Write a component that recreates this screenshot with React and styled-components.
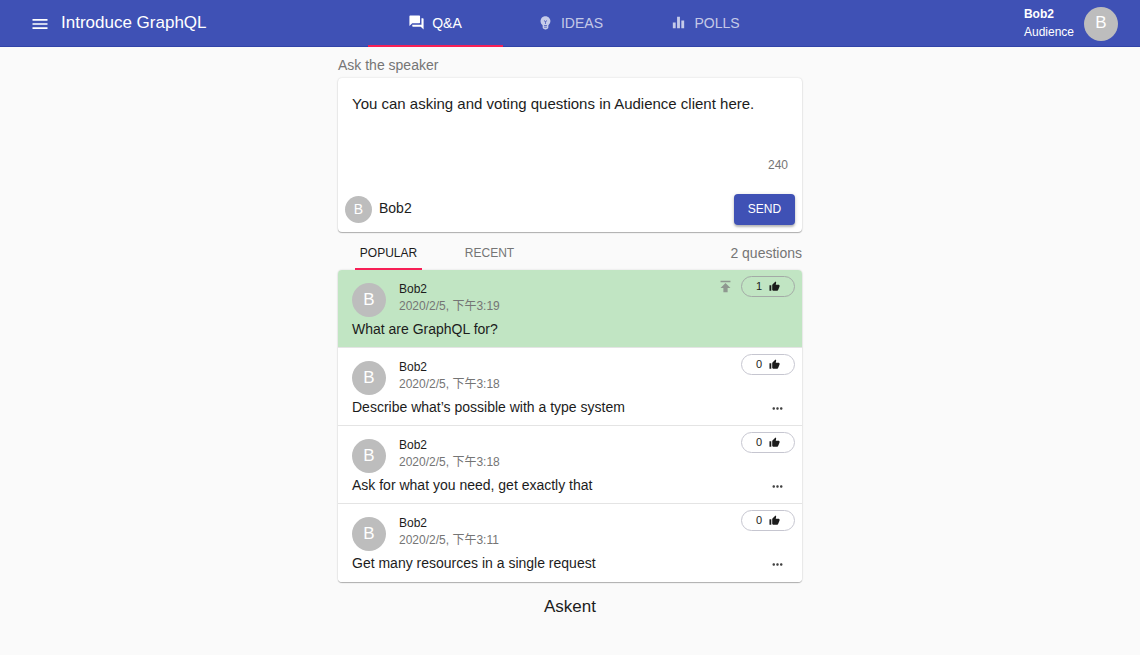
import React, { useState } from "react";
import styled, { createGlobalStyle } from "styled-components";
import {
  MdMenu,
  MdQuestionAnswer,
  MdEmojiObjects,
  MdEqualizer,
  MdThumbUp,
  MdPublish,
  MdMoreHoriz,
} from "react-icons/md";

const GlobalStyle = createGlobalStyle`
  *, *::before, *::after { box-sizing: border-box; }
  body {
    margin: 0;
    background: #fafafa;
    color: #1c1c1c;
    font-family: "Liberation Sans", Arial, "Noto Sans CJK SC", sans-serif;
    font-size: 14px;
    line-height: 20px;
  }
  button, textarea { font-family: inherit; color: inherit; }
`;

const PlainButton = styled.button`
  display: inline-flex;
  align-items: center;
  justify-content: center;
  padding: 0;
  border: 0;
  background: none;
  cursor: pointer;
`;

const Header = styled.header`
  display: grid;
  grid-template-columns: 1fr auto 1fr;
  height: 47px;
  padding: 0 22px;
  background: #3f51b5;
  box-shadow: inset 0 -1px 0 #3144a8;
  color: #fff;
`;

const Brand = styled.div`
  display: flex;
  align-items: center;
  gap: 11px;
  padding-left: 8px;
`;

const Title = styled.h1`
  margin: 0;
  padding-bottom: 2px;
  font-size: 17px;
  font-weight: 400;
  line-height: 20px;
  white-space: nowrap;
`;

const MainTabs = styled.nav`
  display: flex;
`;

const MainTab = styled(PlainButton)`
  width: 135px;
  height: 47px;
  gap: 7px;
  font-size: 14px;
  color: ${(p) => (p.$active ? "#fff" : "rgba(255, 255, 255, 0.7)")};
  border-bottom: 2px solid ${(p) => (p.$active ? "#f71f56" : "transparent")};
`;

const Account = styled.div`
  display: flex;
  align-items: center;
  justify-content: flex-end;
  gap: 10px;
  font-size: 12px;
  line-height: 18px;
`;

const AccountText = styled.div`
  padding-bottom: 2px;
`;

const AccountName = styled.div`
  font-weight: 700;
`;

const Avatar = styled.span`
  display: flex;
  flex: none;
  align-items: center;
  justify-content: center;
  width: ${(p) => (p.$small ? 27 : 34)}px;
  height: ${(p) => (p.$small ? 27 : 34)}px;
  padding-bottom: 2px;
  border-radius: 50%;
  background: #bdbdbd;
  color: #fff;
  font-size: ${(p) => (p.$small ? 14 : 17)}px;
`;

const Main = styled.main`
  max-width: 464px;
  margin: 0 auto;
  padding-top: 8px;
`;

const FieldLabel = styled.label`
  display: block;
  margin-bottom: 3px;
  color: #757575;
`;

const Card = styled.div`
  overflow: hidden;
  border-radius: 4px;
  background: #fff;
  box-shadow: 0 1px 1px rgba(0, 0, 0, 0.28), 0 0 2px rgba(0, 0, 0, 0.16);
`;

const Composer = styled(Card).attrs({ as: "form" })`
  display: flex;
  flex-direction: column;
`;

const QuestionInput = styled.textarea`
  display: block;
  width: 100%;
  height: 77px;
  padding: 16px 14px 0;
  border: 0;
  outline: 0;
  resize: none;
  background: transparent;
  font-size: 15px;
  line-height: 20px;
`;

const Counter = styled.div`
  padding: 0 14px;
  text-align: right;
  font-size: 12px;
  color: #757575;
`;

const ComposerFooter = styled.div`
  display: flex;
  align-items: center;
  gap: 7px;
  padding: 19px 7px 7px;
`;

const Author = styled.span`
  flex: 1;
  padding-bottom: 3px;
`;

const SendButton = styled(PlainButton)`
  width: 61px;
  height: 31px;
  padding-bottom: 2px;
  border-radius: 4px;
  background: #3f51b5;
  color: #fff;
  font-size: 12px;
  box-shadow: 0 2px 2px rgba(0, 0, 0, 0.2), 0 1px 4px rgba(0, 0, 0, 0.16);
`;

const ListBar = styled.div`
  display: flex;
  align-items: center;
  height: 38px;
`;

const SortTab = styled(PlainButton)`
  width: 67px;
  height: 38px;
  margin: 0 17px;
  padding-top: 6px;
  font-size: 12px;
  color: ${(p) => (p.$active ? "#1c1c1c" : "#757575")};
  border-bottom: 2px solid ${(p) => (p.$active ? "#f71f56" : "transparent")};
`;

const Total = styled.span`
  margin-left: auto;
  padding-top: 3px;
  color: #757575;
`;

const QuestionList = styled(Card).attrs({ as: "ul" })`
  margin: 0;
  padding: 0;
  list-style: none;
`;

const Question = styled.li`
  display: flex;
  justify-content: space-between;
  min-height: 78px;
  padding: 6px 7px 7px 14px;
  background: ${(p) => (p.$top ? "#c1e5c3" : "#fff")};
  border-bottom: 1px solid #e4e4e4;
  &:last-child { border-bottom-color: transparent; }
`;

const QuestionBody = styled.div`
  padding-top: 5px;
`;

const Meta = styled.div`
  display: flex;
  align-items: flex-end;
  gap: 13px;
  height: 36px;
  margin-bottom: 2px;
  font-size: 12px;
  line-height: 17px;
`;

const Stamp = styled.div`
  height: 36px;
`;

const Time = styled.time`
  display: block;
  color: #757575;
`;

const QuestionText = styled.p`
  margin: 0;
`;

const Actions = styled.div`
  display: flex;
  flex-direction: column;
  align-items: flex-end;
  justify-content: space-between;
`;

const VoteRow = styled.div`
  display: flex;
  align-items: center;
  gap: 7px;
  color: #8f9890;
`;

const VoteButton = styled(PlainButton)`
  width: 54px;
  height: 21px;
  gap: 7px;
  padding-bottom: 1px;
  border: 1px solid ${(p) => (p.$top ? "#a3aaa6" : "#c6c6d0")};
  border-radius: 11px;
  font-size: 11px;
  color: #1c1c1c;
`;

const MoreButton = styled(PlainButton)`
  width: 35px;
  height: 20px;
  color: #424242;
`;

const Footer = styled.footer`
  padding: 15px 0;
  text-align: center;
  font-size: 17px;
`;

const questions = [
  { time: "2020/2/5, 下午3:19", text: "What are GraphQL for?", votes: 1, top: true },
  { time: "2020/2/5, 下午3:18", text: "Describe what’s possible with a type system", votes: 0 },
  { time: "2020/2/5, 下午3:18", text: "Ask for what you need, get exactly that", votes: 0 },
  { time: "2020/2/5, 下午3:11", text: "Get many resources in a single request", votes: 0 },
];

const sections = [
  { name: "Q&A", Icon: MdQuestionAnswer },
  { name: "IDEAS", Icon: MdEmojiObjects },
  { name: "POLLS", Icon: MdEqualizer },
];

export default function App() {
  const [section, setSection] = useState("Q&A");
  const [sort, setSort] = useState("POPULAR");
  const [draft, setDraft] = useState(
    "You can asking and voting questions in Audience client here."
  );

  return (
    <>
      <GlobalStyle />
      <Header>
        <Brand>
          <PlainButton aria-label="Menu">
            <MdMenu size={20} />
          </PlainButton>
          <Title>Introduce GraphQL</Title>
        </Brand>
        <MainTabs>
          {sections.map(({ name, Icon }) => (
            <MainTab key={name} $active={section === name} onClick={() => setSection(name)}>
              <Icon size={17} />
              {name}
            </MainTab>
          ))}
        </MainTabs>
        <Account>
          <AccountText>
            <AccountName>Bob2</AccountName>
            <div>Audience</div>
          </AccountText>
          <Avatar>B</Avatar>
        </Account>
      </Header>

      <Main>
        <FieldLabel htmlFor="question">Ask the speaker</FieldLabel>
        <Composer onSubmit={(e) => e.preventDefault()}>
          <QuestionInput
            id="question"
            value={draft}
            onChange={(e) => setDraft(e.target.value)}
          />
          <Counter>240</Counter>
          <ComposerFooter>
            <Avatar $small>B</Avatar>
            <Author>Bob2</Author>
            <SendButton type="submit">SEND</SendButton>
          </ComposerFooter>
        </Composer>

        <ListBar>
          {["POPULAR", "RECENT"].map((name) => (
            <SortTab key={name} $active={sort === name} onClick={() => setSort(name)}>
              {name}
            </SortTab>
          ))}
          <Total>2 questions</Total>
        </ListBar>

        <QuestionList>
          {questions.map((q) => (
            <Question key={q.text} $top={q.top}>
              <QuestionBody>
                <Meta>
                  <Avatar>B</Avatar>
                  <Stamp>
                    <div>Bob2</div>
                    <Time>{q.time}</Time>
                  </Stamp>
                </Meta>
                <QuestionText>{q.text}</QuestionText>
              </QuestionBody>
              <Actions>
                <VoteRow>
                  {q.top && <MdPublish size={17} />}
                  <VoteButton $top={q.top} aria-label={`Vote, ${q.votes}`}>
                    {q.votes}
                    <MdThumbUp size={11} />
                  </VoteButton>
                </VoteRow>
                {!q.top && (
                  <MoreButton aria-label="More">
                    <MdMoreHoriz size={15} />
                  </MoreButton>
                )}
              </Actions>
            </Question>
          ))}
        </QuestionList>
      </Main>
      <Footer>Askent</Footer>
    </>
  );
}
